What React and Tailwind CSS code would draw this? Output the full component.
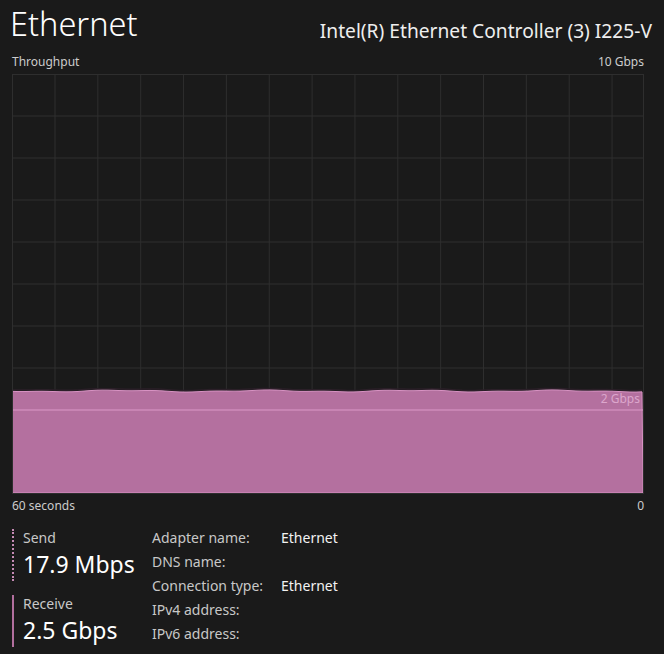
import React from "react";

const font = { fontFamily: '"Noto Sans", "Open Sans", sans-serif' };

const verticals = [0, 43];
for (let k = 1; k <= 13; k++) verticals.push(43 + 42.85 * k);
const horizontals = [];
for (let k = 1; k < 10; k++) horizontals.push(42 * k);

function buildWave() {
  // small ripple on the top of the fill, roughly flat at ~2.5 Gbps
  const pts = [];
  for (let x = 0; x <= 631; x += 6) {
    const y = 317 + Math.sin(x / 23) * 0.7 + Math.sin(x / 9 + 1.3) * 0.4;
    pts.push([x, y]);
  }
  return pts;
}

function ThroughputGraph() {
  const wave = buildWave();
  const top = wave.map(([x, y], i) => `${i ? "L" : "M"}${x} ${y.toFixed(2)}`).join(" ");
  const area = `${top} L631 419 L0 419 Z`;
  const shadow = wave.map(([x, y], i) => `${i ? "L" : "M"}${x} ${(y - 1.5).toFixed(2)}`).join(" ");

  return (
    <div className="relative h-[420px] w-[632px] border border-[#2e2e2e]">
      <svg className="absolute inset-0 h-full w-full" viewBox="0 0 630 418" preserveAspectRatio="none">
        {verticals.slice(1).map((x) => (
          <line key={x} x1={x - 1} y1="0" x2={x - 1} y2="418" stroke="#2e2e2e" strokeWidth="1" />
        ))}
        {horizontals.map((y) => (
          <line key={y} x1="0" y1={y - 1} x2="630" y2={y - 1} stroke="#2e2e2e" strokeWidth="1" />
        ))}
        <path d={shadow} fill="none" stroke="#2b1f28" strokeWidth="1.5" transform="translate(-1 -1)" />
        <path d={area} fill="#b4709f" stroke="#d993c4" strokeWidth="1" transform="translate(-1 -1)" />
        <line x1="0" y1="335" x2="630" y2="335" stroke="#dc98c8" strokeWidth="1" />
      </svg>
      <span className="absolute right-[3px] top-[316px] text-[12px] leading-[16px] text-[#dca6cc]">2 Gbps</span>
    </div>
  );
}

function Stat({ label, value, dotted }) {
  return (
    <div
      className={`flex flex-col border-l-2 pl-[9px] ${
        dotted ? "border-dotted border-[#c48ab4]" : "border-solid border-[#b26f9e]"
      }`}
    >
      <span className="text-[14px] leading-[18px] text-[#c8c8c8]">{label}</span>
      <span className="pt-[1px] text-[23px] leading-[33px] text-white">{value}</span>
    </div>
  );
}

const details = [
  ["Adapter name:", "Ethernet"],
  ["DNS name:", ""],
  ["Connection type:", "Ethernet"],
  ["IPv4 address:", ""],
  ["IPv6 address:", ""],
];

export default function App() {
  return (
    <div className="h-[654px] w-[664px] overflow-hidden bg-[#1a1a1a] px-3" style={font}>
      <div className="flex items-end justify-between">
        <h1 className="-ml-[2px] text-[32.5px] font-light leading-[48px] text-white">Ethernet</h1>
        <span className="pb-[4px] text-[19.2px] leading-[26px] text-[#eeeeee]">
          Intel(R) Ethernet Controller (3) I225-V
        </span>
      </div>
      <div className="mt-[4px] flex justify-between text-[12px] leading-[20px] text-[#cccccc]">
        <span>Throughput</span>
        <span className="pr-[8px]">10 Gbps</span>
      </div>
      <div className="mt-[2px]">
        <ThroughputGraph />
      </div>
      <div className="mt-[3px] flex justify-between text-[12px] leading-[18px] text-[#cccccc]">
        <span>60 seconds</span>
        <span className="pr-[8px]">0</span>
      </div>
      <div className="mt-[14px] flex">
        <div className="flex w-[140px] flex-col gap-[14px]">
          <Stat label="Send" value="17.9 Mbps" dotted />
          <Stat label="Receive" value="2.5 Gbps" />
        </div>
        <div className="-mt-[3px] flex flex-col text-[14px] leading-[24px]">
          {details.map(([k, v]) => (
            <div key={k} className="flex">
              <span className="w-[129px] text-[#c8c8c8]">{k}</span>
              <span className="text-[#f2f2f2]">{v}</span>
            </div>
          ))}
        </div>
      </div>
    </div>
  );
}
